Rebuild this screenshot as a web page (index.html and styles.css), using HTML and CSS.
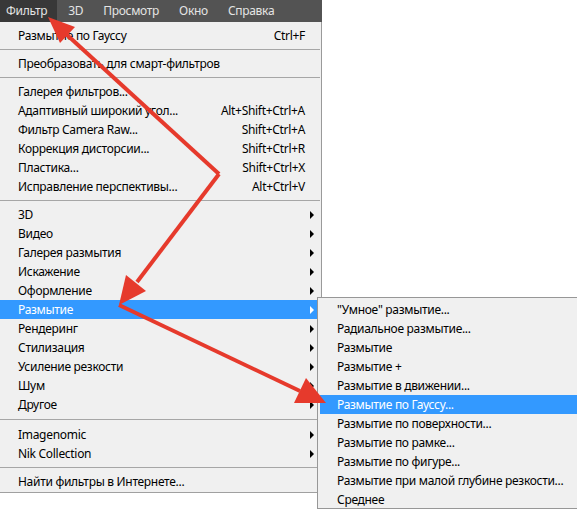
FILE: index.html
```html
<!DOCTYPE html>
<html>
<head lang="ru">
    <meta charset="UTF-8">
    <title>Фильтр</title>
    <link rel="stylesheet" href="styles.css">
</head>
<body>
<div class="menubar">
    <span class="menubar-item active">Фильтр</span>
    <span class="menubar-item">3D</span>
    <span class="menubar-item">Просмотр</span>
    <span class="menubar-item">Окно</span>
    <span class="menubar-item">Справка</span>
</div>
<div class="menu">
    <div class="menu-item"><span>Размытие по Гауссу</span><span class="key">Ctrl+F</span></div>
    <div class="menu-sep"></div>
    <div class="menu-item"><span>Преобразовать для смарт-фильтров</span></div>
    <div class="menu-sep"></div>
    <div class="menu-item"><span>Галерея фильтров...</span></div>
    <div class="menu-item"><span>Адаптивный широкий угол...</span><span class="key">Alt+Shift+Ctrl+A</span></div>
    <div class="menu-item"><span>Фильтр Camera Raw...</span><span class="key">Shift+Ctrl+A</span></div>
    <div class="menu-item"><span>Коррекция дисторсии...</span><span class="key">Shift+Ctrl+R</span></div>
    <div class="menu-item"><span>Пластика...</span><span class="key">Shift+Ctrl+X</span></div>
    <div class="menu-item"><span>Исправление перспективы...</span><span class="key">Alt+Ctrl+V</span></div>
    <div class="menu-sep"></div>
    <div class="menu-item sub"><span>3D</span><i class="arrow"></i></div>
    <div class="menu-item sub"><span>Видео</span><i class="arrow"></i></div>
    <div class="menu-item sub"><span>Галерея размытия</span><i class="arrow"></i></div>
    <div class="menu-item sub"><span>Искажение</span><i class="arrow"></i></div>
    <div class="menu-item sub"><span>Оформление</span><i class="arrow"></i></div>
    <div class="menu-item sub selected"><span>Размытие</span><i class="arrow"></i></div>
    <div class="menu-item sub"><span>Рендеринг</span><i class="arrow"></i></div>
    <div class="menu-item sub"><span>Стилизация</span><i class="arrow"></i></div>
    <div class="menu-item sub"><span>Усиление резкости</span><i class="arrow"></i></div>
    <div class="menu-item sub"><span>Шум</span><i class="arrow"></i></div>
    <div class="menu-item sub"><span>Другое</span><i class="arrow"></i></div>
    <div class="menu-sep wide"></div>
    <div class="menu-item sub"><span>Imagenomic</span><i class="arrow"></i></div>
    <div class="menu-item sub"><span>Nik Collection</span><i class="arrow"></i></div>
    <div class="menu-sep"></div>
    <div class="menu-item"><span>Найти фильтры в Интернете...</span></div>
</div>
<div class="submenu">
    <div class="submenu-item">"Умное" размытие...</div>
    <div class="submenu-item">Радиальное размытие...</div>
    <div class="submenu-item">Размытие</div>
    <div class="submenu-item">Размытие +</div>
    <div class="submenu-item">Размытие в движении...</div>
    <div class="submenu-item selected">Размытие по Гауссу...</div>
    <div class="submenu-item">Размытие по поверхности...</div>
    <div class="submenu-item">Размытие по рамке...</div>
    <div class="submenu-item">Размытие по фигуре...</div>
    <div class="submenu-item">Размытие при малой глубине резкости...</div>
    <div class="submenu-item">Среднее</div>
</div>
<!-- стрелки поверх меню -->
<svg class="arrows" width="577" height="512" viewBox="0 0 577 512">
    <g stroke="#e63a2c" stroke-width="4" fill="none">
        <line x1="219" y1="174" x2="66" y2="34"/>
        <line x1="219" y1="174" x2="137" y2="282"/>
        <line x1="119" y1="305" x2="300" y2="391"/>
    </g>
    <g fill="#e63a2c">
        <polygon points="48,17 75,27 60,43"/>
        <polygon points="119,305 126,275 146,291"/>
        <polygon points="326,403 306,378 294,403"/>
    </g>
</svg>
</body>
</html>
```
FILE: styles.css
```css
body{
    margin: 0;
    background: #fff;
    font: 12px "Noto Sans", "Liberation Sans", sans-serif;
    letter-spacing: -0.3px;
    color: #000;
}
.menubar{
    display: flex;
    width: 322px;
    height: 22px;
    background: #535353;
    color: #e4e4e4;
}
.menubar-item{
    line-height: 22px;
    padding: 0 10px;
}
.menubar-item.active{
    background: #383838;
    padding: 0 10px 0 6px;
}
.menubar-item.active + .menubar-item{
    padding-left: 11px;
}
.menu{
    width: 322px;
    box-sizing: border-box;
    background: #f0f0f0;
    border-right: 1px solid #9a9a9a;
    border-bottom: 1px solid #a0a0a0;
    padding: 4px 0 1px;
}
.menu-item{
    display: flex;
    justify-content: space-between;
    align-items: center;
    height: 19px;
    padding: 0 16px 0 18px;
    white-space: nowrap;
}
.menu-item.sub{
    padding-right: 7px;
}
.menu-item.selected{
    background: #3399ff;
    color: #fff;
}
.arrow{
    width: 0;
    height: 0;
    border-top: 4px solid transparent;
    border-bottom: 4px solid transparent;
    border-left: 4px solid #000;
}
.selected .arrow{
    border-left-color: #fff;
}
.menu-sep{
    height: 1px;
    margin: 4px 1px 4px 0;
    background: #a6a6a6;
}
.menu-sep.wide{
    margin-top: 5px;
    margin-bottom: 5px;
}
.submenu{
    position: absolute;
    left: 317px;
    top: 297px;
    width: 280px;
    height: 212px;
    box-sizing: border-box;
    background: #f0f0f0;
    border: 1px solid #979797;
    padding: 2px 2px 0;
}
.submenu-item{
    height: 19px;
    line-height: 19px;
    padding-left: 17px;
    white-space: nowrap;
}
.submenu-item.selected{
    background: #3399ff;
    color: #fff;
}
.arrows{
    position: absolute;
    left: 0;
    top: 0;
    pointer-events: none;
}
```
